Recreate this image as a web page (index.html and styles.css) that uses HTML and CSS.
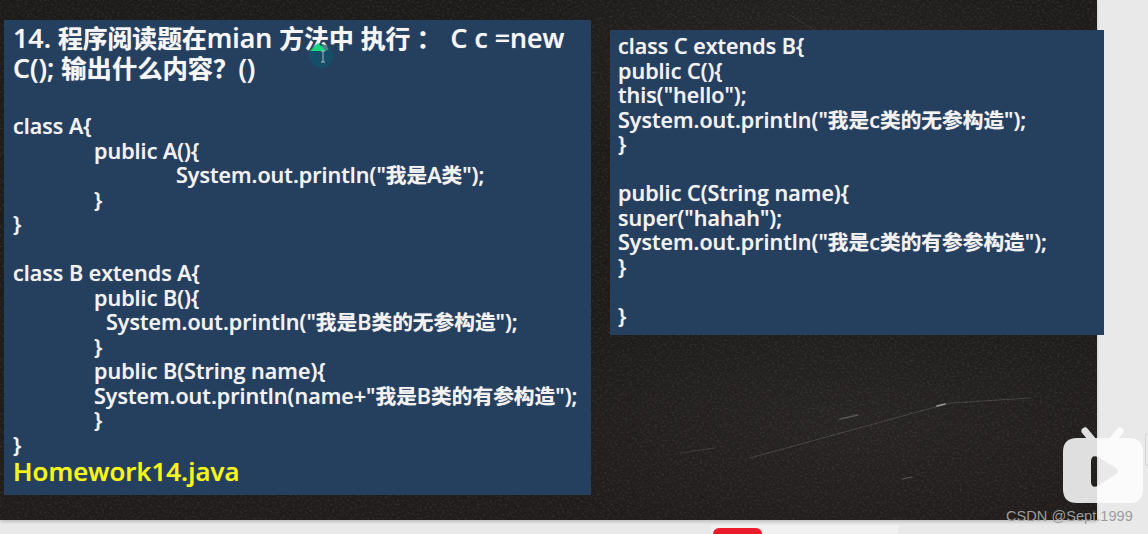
FILE: index.html
```html
<!DOCTYPE html>
<html lang="zh">
<head>
<meta charset="utf-8">
<title>Homework14</title>
<link rel="stylesheet" href="styles.css">
</head>
<body>
<main class="page">
  <section class="board">
    <svg class="scratches" viewBox="0 0 1097 520" aria-hidden="true">
      <defs>
        <filter id="grain" x="0" y="0" width="100%" height="100%">
          <feTurbulence type="fractalNoise" baseFrequency=".4 .5" numOctaves="3" seed="7"/>
          <feColorMatrix values="0 0 0 0 1  0 0 0 0 1  0 0 0 0 1  1.6 0 0 0 -.72"/>
        </filter>
        <filter id="soft"><feGaussianBlur stdDeviation=".6"/></filter>
      </defs>
      <rect width="1097" height="520" filter="url(#grain)" opacity=".12"/>
      <g fill="none" stroke="#fff" stroke-linecap="round" filter="url(#soft)">
        <path d="M750 458 L950 403 L1030 398" stroke-opacity=".14"/>
        <path d="M840 419 L858 415" stroke-opacity=".22" stroke-width="1.4"/>
        <path d="M937 406 L945 404" stroke-opacity=".5" stroke-width="1.6"/>
        <path d="M680 453 L715 448" stroke-opacity=".1"/>
        <path d="M902 479 L912 477" stroke-opacity=".25"/>
        <path d="M790 15 L830 40" stroke-opacity=".08"/>
      </g>
    </svg>
    <article class="panel panel-left">
      <h1 class="title">14. <span class="zh">程序阅读题在</span>mian <span class="zh">方法中</span> <span class="zh colon">执行 ：</span> C c =new C(); <span class="zh wide">输出什么内容？</span>()</h1>
      <div class="code">
        <div class="line">class A{</div>
        <div class="line i1">public A(){</div>
        <div class="line i2">System.out.println("<span class="zh">我是</span>A<span class="zh">类</span>");</div>
        <div class="line i1">}</div>
        <div class="line">}</div>
        <div class="line blank"></div>
        <div class="line">class B extends A{</div>
        <div class="line i1">public B(){</div>
        <div class="line i1b">System.out.println("<span class="zh">我是</span>B<span class="zh">类的无参构造</span>");</div>
        <div class="line i1">}</div>
        <div class="line i1">public B(String name){</div>
        <div class="line i1">System.out.println(name+"<span class="zh">我是</span>B<span class="zh">类的有参构造</span>");</div>
        <div class="line i1">}</div>
        <div class="line">}</div>
      </div>
      <p class="filename">Homework14.java</p>
      <div class="cursor" aria-hidden="true">
        <svg viewBox="0 0 30 30" width="30" height="30">
          <circle cx="15" cy="15" r="12" fill="#10566c" fill-opacity=".7"/>
          <path d="M4 10 L12 2 L20 10 Z" fill="#19d67e"/>
          <path d="M15 10 H19 M17 10 V21 M15 21 H19" stroke="#aeb8bd" stroke-width="1" fill="none"/>
        </svg>
      </div>
    </article>
    <article class="panel panel-right">
      <div class="code">
        <div class="line">class C extends B{</div>
        <div class="line">public C(){</div>
        <div class="line">this("hello");</div>
        <div class="line">System.out.println("<span class="zh">我是</span>c<span class="zh">类的无参构造</span>");</div>
        <div class="line">}</div>
        <div class="line blank"></div>
        <div class="line">public C(String name){</div>
        <div class="line">super("hahah");</div>
        <div class="line">System.out.println("<span class="zh">我是</span>c<span class="zh">类的有参参构造</span>");</div>
        <div class="line">}</div>
        <div class="line blank"></div>
        <div class="line">}</div>
      </div>
    </article>
  </section>
  <div class="tab" aria-hidden="true"><span class="tab-red"></span></div>
  <span class="edge" aria-hidden="true"></span>
</main>
<svg class="tv" viewBox="0 0 84 80" aria-hidden="true">
  <path class="tv-ears" d="M24 4 L33 15 M59 4 L50 15"/>
  <path class="tv-body" fill-rule="evenodd" d="M16 11 H68 Q82 11 82 25 V62 Q82 76 68 76 H16 Q2 76 2 62 V25 Q2 11 16 11 Z M30 35 Q30 27 37 30 L55 41 Q59 44 55 47 L37 59 Q30 62 30 54 Z"/>
</svg>
<span class="watermark">CSDN @Sept.1999</span>
</body>
</html>
```

FILE: styles.css
```css
* { box-sizing: border-box; }
html, body { margin: 0; height: 100%; }
body {
  width: 1148px;
  height: 534px;
  overflow: hidden;
  background: #e9e9e9;
  font-family: "Open Sans", "Noto Sans CJK SC", sans-serif;
  position: relative;
}
.page { width: 1148px; height: 534px; background: #e9e9e9; position: relative; }
.board {
  position: relative;
  width: 1097px;
  height: 520px;
  background:
    radial-gradient(ellipse 320px 120px at 800px 60px, rgba(255,255,255,.04), transparent),
    radial-gradient(ellipse 360px 130px at 850px 420px, rgba(255,255,255,.04), transparent),
    linear-gradient(#1c1b1a, #1f1c1b);
  display: flex;
  align-items: flex-start;
  padding: 20px 0 0 4px;
  gap: 19px;
  box-shadow: 0 2px 3px rgba(0,0,0,.18);
}
.scratches { position: absolute; inset: 0; width: 100%; height: 100%; }
.panel {
  position: relative;
  flex: none;
  background: #253f5f;
  color: #f2f2f2;
}
.panel-left { width: 587px; height: 475px; padding: 3px 9px 0; }
.panel-right { width: 494px; height: 305px; margin-top: 10px; padding: 4px 8px 0; }
.title {
  margin: 0 0 31px;
  font-size: 26.8px;
  line-height: 30px;
  font-weight: 600;
  color: #f6f6f6;
  text-shadow: 0 0 .8px rgba(246,246,246,.7);
}
.title .zh { font-size: 24.8px; font-weight: 700; }
.title .colon { margin-right: 2px; }
.title .wide { font-size: 25.3px; }
.code {
  font-size: 21.6px;
  font-weight: 600;
  text-shadow: 0 0 .8px rgba(242,242,242,.6);
}
.code .zh { font-size: 20.7px; font-weight: 700; }
.line { height: 24.5px; line-height: 24.5px; white-space: nowrap; }
.i1 { padding-left: 81px; }
.i1b { padding-left: 93px; }
.i2 { padding-left: 163px; }
.filename {
  margin: 0;
  font-size: 26px;
  line-height: 28px;
  font-weight: 600;
  color: #f5f51e;
  text-shadow: 0 0 .8px rgba(245,245,30,.7);
}
.cursor { position: absolute; left: 302px; top: 21px; width: 30px; height: 30px; }
.tab {
  position: absolute;
  left: 711px;
  top: 525px;
  width: 187px;
  height: 9px;
  background: #f1f1f1;
  padding: 3px 0 0 2px;
}
.tab-red {
  display: block;
  width: 49px;
  height: 8px;
  border-radius: 6px 6px 0 0;
  background: #ea1c2c;
}
.edge {
  position: absolute;
  left: 1145px;
  top: 433px;
  width: 6px;
  height: 33px;
  border: 1px solid #d4d4d4;
  border-radius: 3px;
}
.tv {
  position: absolute;
  left: 1061px;
  top: 427px;
  width: 84px;
  height: 80px;
  opacity: .86;
}
.tv-ears { stroke: #fff; stroke-width: 7; stroke-linecap: round; fill: none; }
.tv-body { fill: #fff; }
.watermark {
  position: absolute;
  left: 1006px;
  top: 508px;
  font-family: "Liberation Sans", sans-serif;
  font-size: 14.6px;
  line-height: 17px;
  color: #9c9c9c;
  white-space: nowrap;
}
```
